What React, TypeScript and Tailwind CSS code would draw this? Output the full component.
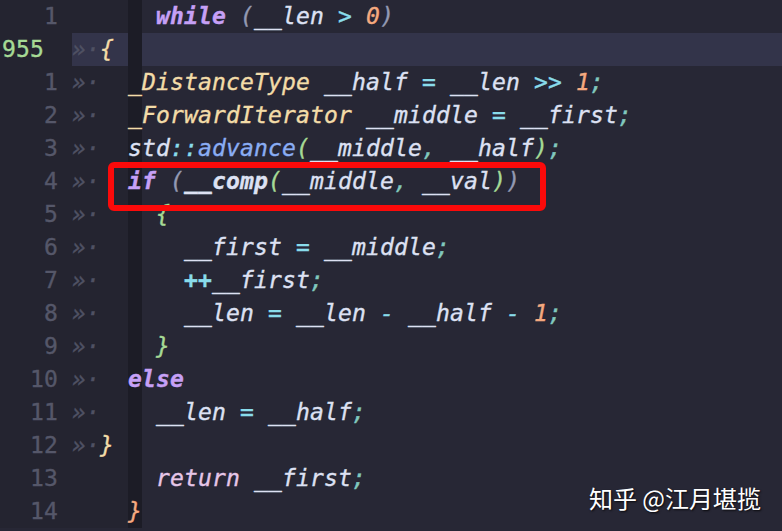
import React from "react";

type Tok = [string, string];

const K = "text-[#c6a0f6] font-bold";
const P = "text-[#9399b2]";
const I = "text-[#dde1f3]";
const O = "text-[#89dceb]";
const N = "text-[#f5a97f]";
const T = "text-[#f3dca8]";
const S = "text-[#81c8be]";
const F = "text-[#8aadf4]";
const G = "text-[#a6da95]";
const D = "text-[#4f5163]";

type RowDef = {
  num: string;
  cur?: boolean;
  g: Tok[];
  code: Tok[];
  hl?: boolean;
};

const arrow: Tok = ["»·", D];

const rows: RowDef[] = [
  {
    num: "1",
    g: [],
    code: [
      ["  ", I],
      ["while", K],
      [" ", I],
      ["(", P],
      ["__len ", I],
      [">", O],
      [" ", I],
      ["0", N],
      [")", P],
    ],
  },
  { num: "955", cur: true, hl: true, g: [arrow, ["{", T]], code: [] },
  {
    num: "1",
    g: [arrow],
    code: [
      ["_DistanceType", T],
      [" __half ", I],
      ["=", O],
      [" __len ", I],
      [">>", O],
      [" ", I],
      ["1", N],
      [";", S],
    ],
  },
  {
    num: "2",
    g: [arrow],
    code: [
      ["_ForwardIterator", T],
      [" __middle ", I],
      ["=", O],
      [" __first", I],
      [";", S],
    ],
  },
  {
    num: "3",
    g: [arrow],
    code: [
      ["std", I],
      ["::", O],
      ["advance", F],
      ["(", G],
      ["__middle", I],
      [",", S],
      [" __half", I],
      [")", G],
      [";", S],
    ],
  },
  {
    num: "4",
    g: [arrow],
    code: [
      ["if", K],
      [" ", I],
      ["(", P],
      ["__comp", I + " font-bold"],
      ["(", G],
      ["__middle", I],
      [",", S],
      [" __val", I],
      [")", G],
      [")", P],
    ],
  },
  { num: "5", g: [arrow], code: [["  ", I], ["{", G]] },
  {
    num: "6",
    g: [arrow],
    code: [
      ["    __first ", I],
      ["=", O],
      [" __middle", I],
      [";", S],
    ],
  },
  {
    num: "7",
    g: [arrow],
    code: [
      ["    ", I],
      ["++", O + " font-bold"],
      ["__first", I],
      [";", S],
    ],
  },
  {
    num: "8",
    g: [arrow],
    code: [
      ["    __len ", I],
      ["=", O],
      [" __len ", I],
      ["-", O],
      [" __half ", I],
      ["-", O],
      [" ", I],
      ["1", N],
      [";", S],
    ],
  },
  { num: "9", g: [arrow], code: [["  ", I], ["}", G]] },
  { num: "10", g: [arrow], code: [["else", K]] },
  {
    num: "11",
    g: [arrow],
    code: [
      ["  __len ", I],
      ["=", O],
      [" __half", I],
      [";", S],
    ],
  },
  { num: "12", g: [arrow, ["}", T]], code: [] },
  {
    num: "13",
    g: [],
    code: [
      ["  ", I],
      ["return", "text-[#e6c6e8]"],
      [" __first", I],
      [";", S],
    ],
  },
  { num: "14", g: [], code: [["}", "text-[#f5a97f]"]] },
];

function Row({ r }: { r: RowDef }) {
  return (
    <div className="flex h-[33px] whitespace-pre leading-[33px]">
      <div className="w-[72px] h-full pl-[2px] bg-[#242430]">
        <div
          className={
            r.cur
              ? "w-[56px] text-left not-italic text-[#a6da95]"
              : "w-[56px] text-right not-italic text-[#555769]"
          }
        >
          {r.num}
        </div>
      </div>
      <div
        className={`w-[56px] h-full ${
          r.hl ? "bg-[#33344a]" : "bg-[#242430]"
        }`}
      >
        {r.g.map((t, i) => (
          <span key={i} className={t[1]}>
            {t[0]}
          </span>
        ))}
      </div>
      <div
        className={`flex-1 h-full ${
          r.hl
            ? "bg-[linear-gradient(to_right,#1c1c26_14px,#33344a_14px)]"
            : "bg-[linear-gradient(to_right,#1c1c26_14px,#272735_14px)]"
        }`}
      >
        {r.code.map((t, i) => (
          <span key={i} className={t[1]}>
            {t[0]}
          </span>
        ))}
      </div>
    </div>
  );
}

export default function App() {
  return (
    <div className="relative w-[782px] h-[531px] overflow-hidden bg-[#272735] font-['DejaVu_Sans_Mono',monospace] text-[23px] tracking-[0.153px] italic [-webkit-text-stroke:0.35px_currentColor]">
      {rows.map((r, i) => (
        <Row key={i} r={r} />
      ))}
      <div className="absolute left-[108px] top-[162px] w-[438px] h-[49px] border-[6px] border-[#fb0a0a] rounded-[6px]" />
      <div className="absolute right-[21px] bottom-[21px] not-italic text-[24px] leading-none tracking-normal text-white font-['Noto_Sans_CJK_SC',sans-serif] [-webkit-text-stroke:0px] [text-shadow:1px_1px_2px_rgba(0,0,0,0.8)]">
        知乎 @江月堪揽
      </div>
    </div>
  );
}
